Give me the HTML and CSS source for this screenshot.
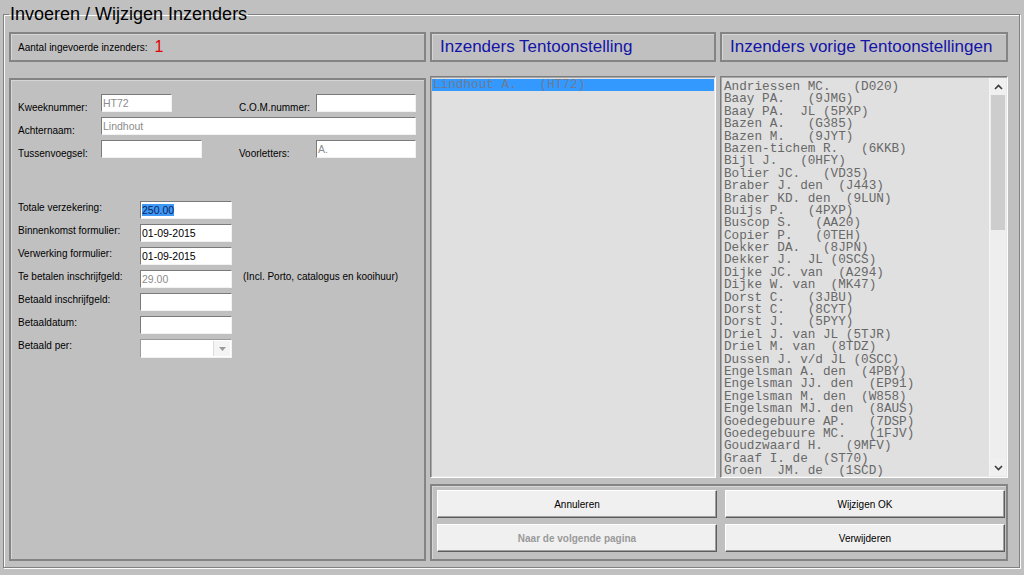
FILE: index.html
```html
<!DOCTYPE html>
<html lang="nl">
<head>
<meta charset="utf-8">
<title>Invoeren / Wijzigen Inzenders</title>
<link rel="stylesheet" href="styles.css">
</head>
<body>
<fieldset class="group">
  <legend class="group-title">Invoeren / Wijzigen Inzenders</legend>
  <div class="layout">
    <div class="panel count-panel">
      <span class="count-label">Aantal ingevoerde inzenders:</span>
      <span class="count-value">1</span>
    </div>
    <div class="panel header-panel"><span class="header-text">Inzenders Tentoonstelling</span></div>
    <div class="panel header-panel"><span class="header-text">Inzenders vorige Tentoonstellingen</span></div>

    <div class="panel form-panel">
      <div class="name-grid">
        <span class="label">Kweeknummer:</span>
        <div class="field muted w-kweek">HT72</div>
        <span class="label">C.O.M.nummer:</span>
        <div class="field"></div>

        <span class="label">Achternaam:</span>
        <div class="field muted span-3">Lindhout</div>

        <span class="label">Tussenvoegsel:</span>
        <div class="field w-tussen"></div>
        <span class="label">Voorletters:</span>
        <div class="field muted">A.</div>
      </div>

      <div class="money-grid">
        <span class="label">Totale verzekering:</span>
        <div class="field"><span class="selection">250.00</span></div>
        <span></span>

        <span class="label">Binnenkomst formulier:</span>
        <div class="field">01-09-2015</div>
        <span></span>

        <span class="label">Verwerking formulier:</span>
        <div class="field">01-09-2015</div>
        <span></span>

        <span class="label">Te betalen inschrijfgeld:</span>
        <div class="field muted">29.00</div>
        <span class="label note">(Incl. Porto, catalogus en kooihuur)</span>

        <span class="label">Betaald inschrijfgeld:</span>
        <div class="field"></div>
        <span></span>

        <span class="label">Betaaldatum:</span>
        <div class="field"></div>
        <span></span>

        <span class="label">Betaald per:</span>
        <div class="field combo">
          <span class="combo-text"></span>
          <span class="combo-btn"><svg width="7" height="4" viewBox="0 0 7 4"><polygon points="0,0 7,0 3.5,4" fill="#9a9a9a"/></svg></span>
        </div>
        <span></span>
      </div>
    </div>

    <div class="listbox current-list">
      <div class="list-items">
        <div class="list-row selected">Lindhout A.   (HT72)</div>
      </div>
    </div>

    <div class="listbox prev-list">
      <div class="list-items">
        <div class="list-row">Andriessen MC.   (D020)</div>
        <div class="list-row">Baay PA.   (9JMG)</div>
        <div class="list-row">Baay PA.  JL (5PXP)</div>
        <div class="list-row">Bazen A.   (G385)</div>
        <div class="list-row">Bazen M.   (9JYT)</div>
        <div class="list-row">Bazen-tichem R.   (6KKB)</div>
        <div class="list-row">Bijl J.   (0HFY)</div>
        <div class="list-row">Bolier JC.   (VD35)</div>
        <div class="list-row">Braber J. den  (J443)</div>
        <div class="list-row">Braber KD. den  (9LUN)</div>
        <div class="list-row">Buijs P.   (4PXP)</div>
        <div class="list-row">Buscop S.   (AA20)</div>
        <div class="list-row">Copier P.   (0TEH)</div>
        <div class="list-row">Dekker DA.   (8JPN)</div>
        <div class="list-row">Dekker J.  JL (0SCS)</div>
        <div class="list-row">Dijke JC. van  (A294)</div>
        <div class="list-row">Dijke W. van  (MK47)</div>
        <div class="list-row">Dorst C.   (3JBU)</div>
        <div class="list-row">Dorst C.   (8CYT)</div>
        <div class="list-row">Dorst J.   (5PYY)</div>
        <div class="list-row">Driel J. van JL (5TJR)</div>
        <div class="list-row">Driel M. van  (8TDZ)</div>
        <div class="list-row">Dussen J. v/d JL (0SCC)</div>
        <div class="list-row">Engelsman A. den  (4PBY)</div>
        <div class="list-row">Engelsman JJ. den  (EP91)</div>
        <div class="list-row">Engelsman M. den  (W858)</div>
        <div class="list-row">Engelsman MJ. den  (8AUS)</div>
        <div class="list-row">Goedegebuure AP.   (7DSP)</div>
        <div class="list-row">Goedegebuure MC.   (1FJV)</div>
        <div class="list-row">Goudzwaard H.   (9MFV)</div>
        <div class="list-row">Graaf I. de  (ST70)</div>
        <div class="list-row">Groen  JM. de  (1SCD)</div>
      </div>
      <div class="scrollbar">
        <div class="scroll-btn"><svg width="9" height="6" viewBox="0 0 9 6"><polyline points="1,5 4.5,1.5 8,5" fill="none" stroke="#3c3c3c" stroke-width="1.6"/></svg></div>
        <div class="scroll-track"><div class="scroll-thumb"></div></div>
        <div class="scroll-btn"><svg width="9" height="6" viewBox="0 0 9 6"><polyline points="1,1 4.5,4.5 8,1" fill="none" stroke="#3c3c3c" stroke-width="1.6"/></svg></div>
      </div>
    </div>

    <div class="panel button-panel">
      <button class="btn" type="button">Annuleren</button>
      <button class="btn" type="button">Wijzigen OK</button>
      <button class="btn disabled" type="button" disabled>Naar de volgende pagina</button>
      <button class="btn" type="button">Verwijderen</button>
    </div>
  </div>
</fieldset>
</body>
</html>
```

FILE: styles.css
```css
* { box-sizing: border-box; }

html, body {
  margin: 0;
  height: 100%;
}

body {
  background: #c0c0c0;
  font-family: "Liberation Sans", Arial, sans-serif;
  font-size: 10px;
  color: #000;
  overflow: hidden;
}

.group {
  margin: 4px 0 0 3px;
  width: 1017px;
  height: 564px;
  padding: 8px 0 0 5px;
  border: 1px solid #808080;
  box-shadow: inset 1px 1px 0 #fafafa, 1px 1px 0 #fafafa;
  min-width: 0;
}

.group-title {
  font-size: 18px;
  line-height: 20px;
  padding: 0 1px;
  color: #000;
}

.layout {
  display: grid;
  grid-template-columns: 417px 286px 288px;
  column-gap: 4px;
  row-gap: 6px;
}

.panel {
  border: 2px solid #848484;
  box-shadow: inset 1px 1px 0 #d6d6d6;
  background: #c0c0c0;
}

.count-panel,
.header-panel {
  height: 30px;
  margin-bottom: 8px;
  display: flex;
  align-items: center;
}

.count-panel {
  padding-left: 7px;
}

.count-label {
  font-size: 10px;
  margin-top: 1px;
}

.count-value {
  color: #e00000;
  font-size: 16px;
  margin-left: 7px;
  line-height: 16px;
}

.header-panel {
  padding-left: 8px;
}

.header-text {
  color: #1414a8;
  font-size: 17px;
}

/* form panel */
.form-panel {
  grid-column: 1;
  grid-row: 2 / 4;
  margin-top: 2px;
  padding: 14px 0 0 7px;
}

.name-grid {
  display: grid;
  grid-template-columns: 83px 138px 77px 100px;
  grid-auto-rows: 18px;
  row-gap: 5px;
}

.label {
  font-size: 10px;
  line-height: 12px;
  white-space: nowrap;
}

.name-grid .label {
  align-self: end;
  margin-bottom: -2px;
}

.money-grid {
  margin-top: 43px;
  display: grid;
  grid-template-columns: 122px 92px auto;
  grid-auto-rows: 18px;
  row-gap: 5px;
}

.money-grid .label {
  align-self: start;
  padding-top: 1px;
}

.note {
  margin-left: 11px;
}

.field {
  background: #fff;
  border: 1px solid;
  border-color: #7a7a7a #f2f2f2 #f2f2f2 #7a7a7a;
  font-size: 10.5px;
  line-height: 16px;
  padding: 0 1px;
  white-space: nowrap;
  overflow: hidden;
}

.field.muted { color: #8c8c8c; }

.w-kweek { width: 71px; }
.w-tussen { width: 101px; }
.span-3 { grid-column: 2 / 5; }

.selection {
  background: #3d99f5;
  color: #10205a;
}

.combo {
  display: flex;
  justify-content: space-between;
  padding: 0;
  border-color: #9a9a9a #f2f2f2 #f2f2f2 #9a9a9a;
  height: 19px;
}

.combo-btn {
  width: 17px;
  margin: 1px;
  background: #f4f4f4;
  border-left: 1px solid #dcdcdc;
  display: flex;
  align-items: center;
  justify-content: center;
}

/* list boxes */
.listbox {
  height: 402px;
  border: 1px solid;
  border-color: #7c7c7c #fdfdfd #fdfdfd #7c7c7c;
  box-shadow: inset 1px 1px 0 #a8a8a8, inset -1px -1px 0 #e8e8e8;
  background: #e0e0e0;
  display: flex;
  overflow: hidden;
}

.list-items {
  flex: 1;
  overflow: hidden;
  padding: 2px 1px 0 1px;
}

.list-row {
  font-family: "Liberation Mono", "Courier New", monospace;
  font-size: 12.7px;
  line-height: 12.4px;
  height: 12.4px;
  color: #686868;
  white-space: pre;
  padding-left: 1px;
}

.prev-list .list-items {
  padding: 4px 0 0 2px;
}

.list-row.selected {
  background: #3399ff;
  color: #6c7c96;
  height: 12px;
  line-height: 12px;
}

.scrollbar {
  width: 17px;
  margin: 1px 1px 1px 0;
  background: #eeeeee;
  border-left: 1px solid #f6f6f6;
  display: flex;
  flex-direction: column;
}

.scroll-btn {
  height: 17px;
  background: #f0f0f0;
  display: flex;
  align-items: center;
  justify-content: center;
}

.scroll-track {
  flex: 1;
  padding: 0 1px;
}

.scroll-thumb {
  height: 135px;
  background: #cdcdcd;
}

/* buttons */
.button-panel {
  grid-column: 2 / 4;
  height: 77px;
  display: grid;
  grid-template-columns: 1fr 1fr;
  grid-auto-rows: 28px;
  column-gap: 8px;
  row-gap: 6px;
  padding: 4px 1px 0 5px;
  align-content: start;
}

.btn {
  margin: 0;
  font-family: "Liberation Sans", Arial, sans-serif;
  font-size: 10px;
  color: #000;
  background: #f0f0f0;
  border: 1px solid;
  border-color: #ffffff #5c5c5c #5c5c5c #ffffff;
  box-shadow: inset -1px -1px 0 #a0a0a0;
  padding: 0;
}

.btn.disabled {
  color: #9a9a9a;
  font-weight: bold;
}
```
